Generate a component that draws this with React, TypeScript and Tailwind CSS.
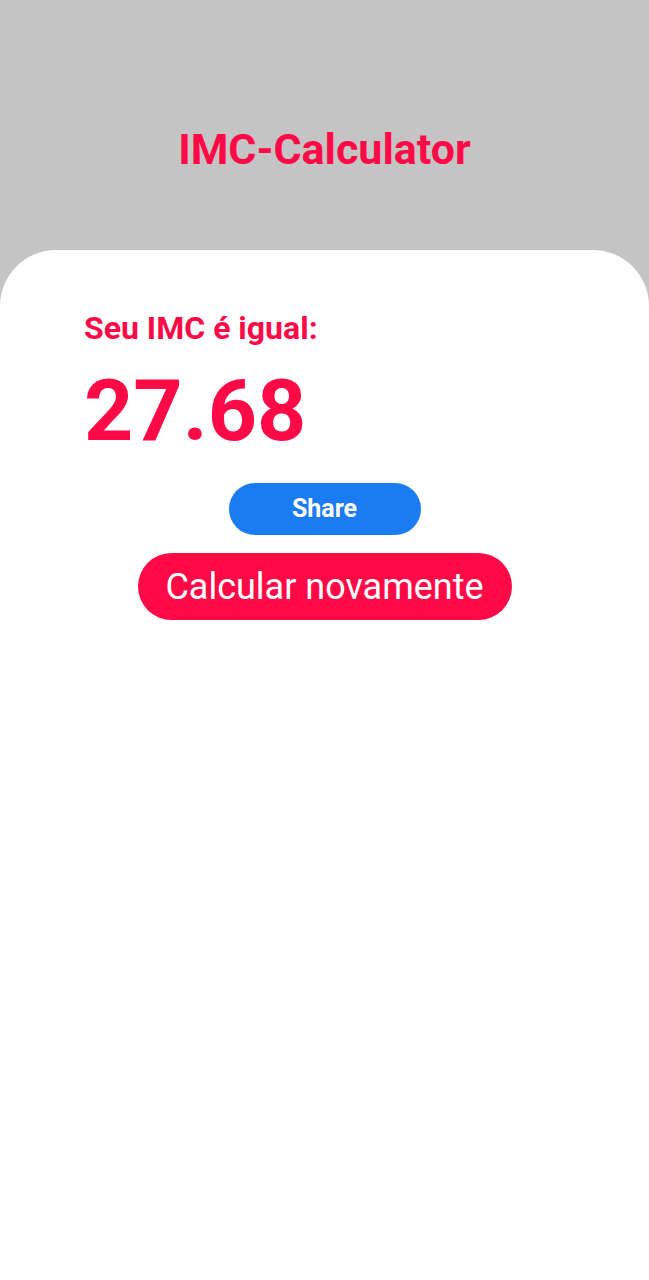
export default function App() {
  return (
    <div
      className="flex min-h-screen flex-col bg-[#c4c4c4]"
      style={{ fontFamily: 'Roboto, "Liberation Sans", sans-serif' }}
    >
      <header className="h-[250px] pt-[128px] text-center">
        <h1 className="text-[43px] font-bold leading-none text-[#ff0a47]">
          IMC-Calculator
        </h1>
      </header>

      <main className="flex flex-1 flex-col rounded-t-[56px] bg-white pt-[62px]">
        <div className="px-[84px]">
          <p className="text-[32px] font-bold leading-none text-[#ff0a47]">
            Seu IMC é igual:
          </p>
          <p className="mt-[24px] text-[86px] font-bold leading-none text-[#ff0a47]">
            27.68
          </p>
        </div>

        <div className="mt-[29px] flex flex-col items-center gap-[18px]">
          <button className="h-[52px] w-[192px] rounded-full bg-[#1a7bf2] text-[25px] font-bold text-white">
            Share
          </button>
          <button className="h-[67px] w-[374px] rounded-full bg-[#ff0a47] text-[36px] text-white">
            Calcular novamente
          </button>
        </div>
      </main>
    </div>
  )
}
